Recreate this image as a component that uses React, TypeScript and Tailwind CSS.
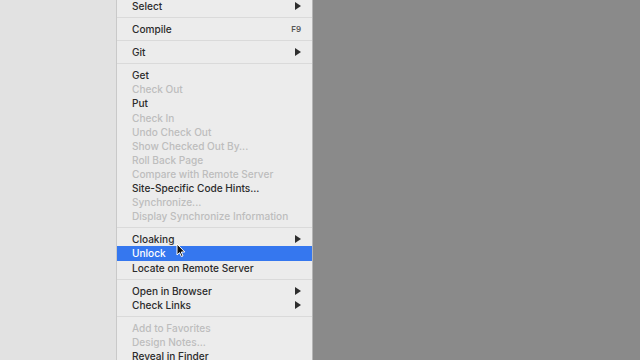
import React from 'react';

type Item =
  | { kind: 'sep' }
  | { kind: 'item'; label: string; disabled?: boolean; submenu?: boolean; shortcut?: string; active?: boolean };

const items: Item[] = [
  { kind: 'item', label: 'Select', submenu: true },
  { kind: 'sep' },
  { kind: 'item', label: 'Compile', shortcut: 'F9' },
  { kind: 'sep' },
  { kind: 'item', label: 'Git', submenu: true },
  { kind: 'sep' },
  { kind: 'item', label: 'Get' },
  { kind: 'item', label: 'Check Out', disabled: true },
  { kind: 'item', label: 'Put' },
  { kind: 'item', label: 'Check In', disabled: true },
  { kind: 'item', label: 'Undo Check Out', disabled: true },
  { kind: 'item', label: 'Show Checked Out By...', disabled: true },
  { kind: 'item', label: 'Roll Back Page', disabled: true },
  { kind: 'item', label: 'Compare with Remote Server', disabled: true },
  { kind: 'item', label: 'Site-Specific Code Hints...' },
  { kind: 'item', label: 'Synchronize...', disabled: true },
  { kind: 'item', label: 'Display Synchronize Information', disabled: true },
  { kind: 'sep' },
  { kind: 'item', label: 'Cloaking', submenu: true },
  { kind: 'item', label: 'Unlock', active: true },
  { kind: 'item', label: 'Locate on Remote Server' },
  { kind: 'sep' },
  { kind: 'item', label: 'Open in Browser', submenu: true },
  { kind: 'item', label: 'Check Links', submenu: true },
  { kind: 'sep' },
  { kind: 'item', label: 'Add to Favorites', disabled: true },
  { kind: 'item', label: 'Design Notes...', disabled: true },
  { kind: 'item', label: 'Reveal in Finder' },
];

const Arrow = ({ white }: { white?: boolean }) => (
  <svg width="6" height="8" viewBox="0 0 6 8" className={white ? 'fill-white' : 'fill-[#2e2e2e]'}>
    <path d="M0 0 L6 4 L0 8 Z" />
  </svg>
);

const Cursor = () => (
  <svg width="10" height="15" viewBox="0 0 10 15" className="absolute left-[59px] top-[-3px]">
    <path d="M1 1 L1 12 L3.6 9.6 L5.4 13.6 L7 12.9 L5.3 9 L8.8 9 Z" fill="#111" stroke="#fff" strokeWidth="1" strokeLinejoin="round" />
  </svg>
);

export default function App() {
  return (
    <div
      className="flex w-[640px] h-[360px] overflow-hidden"
      style={{ fontFamily: 'Inter, "Liberation Sans", sans-serif' }}
    >
      <div className="w-[116px] bg-[#e2e2e2]" />
      <div className="w-[197px] bg-[#ececec] border-l border-[#c9c9c9] border-r border-r-[#b5b5b5] flex flex-col">
        <div className="-mt-[1px] flex flex-col">
          {items.map((it, i) =>
            it.kind === 'sep' ? (
              <div key={i} className="h-[9px] flex items-center">
                <div className="h-px w-full bg-[#dadada]" />
              </div>
            ) : (
              <div
                key={i}
                className={`relative h-[14.1px] flex items-center justify-between pl-[15px] pr-[11px] text-[10.1px] leading-none font-medium ${
                  it.active ? 'bg-[#3577ef] text-white' : it.disabled ? 'text-[#bdbdbd]' : 'text-[#2b2b2b]'
                }`}
              >
                <span>{it.label}</span>
                {it.submenu && <Arrow white={it.active} />}
                {it.shortcut && <span className="text-[8px] font-semibold text-[#555]">{it.shortcut}</span>}
                {it.active && <Cursor />}
              </div>
            )
          )}
        </div>
      </div>
      <div className="flex-1 bg-[#8a8a8a]" />
    </div>
  );
}
